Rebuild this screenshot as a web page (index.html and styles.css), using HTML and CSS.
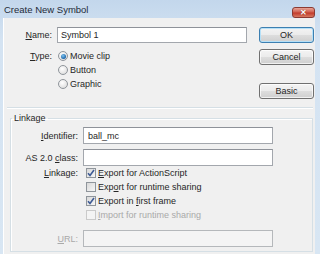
FILE: index.html
```html
<!DOCTYPE html>
<html lang="en">
<head>
  <meta charset="UTF-8" />
  <title>Create New Symbol</title>
  <link rel="stylesheet" href="styles.css">
</head>
<body>

  <div class="window">
    <div class="titlebar">
      <div class="title">Create New Symbol</div>
      <div class="close">&#x2715;</div>
    </div>

    <div class="client">
      <div class="top">
        <div class="fields">
          <div class="row name-row">
            <label class="label"><u>N</u>ame:</label>
            <input class="text name-input" type="text" value="Symbol 1">
          </div>
          <div class="row type-row">
            <label class="label type-label"><u>T</u>ype:</label>
            <div class="radios">
              <div class="radio checked"><span class="dot"></span><span>Movie clip</span></div>
              <div class="radio"><span class="dot"></span><span>Button</span></div>
              <div class="radio"><span class="dot"></span><span>Graphic</span></div>
            </div>
          </div>
        </div>

        <div class="buttons">
          <div class="btn default">OK</div>
          <div class="btn cancel">Cancel</div>
          <div class="btn basic">Basic</div>
        </div>
      </div>

      <div class="sep"></div>

      <fieldset class="group">
        <legend>Linkage</legend>

        <div class="row">
          <label class="label wide"><u>I</u>dentifier:</label>
          <input class="text link-input" type="text" value="ball_mc">
        </div>
        <div class="row as-row">
          <label class="label wide">AS 2.0 <u>c</u>lass:</label>
          <input class="text link-input" type="text" value="">
        </div>

        <div class="row checks-row">
          <label class="label wide check-label"><u>L</u>inkage:</label>
          <div class="checks">
            <div class="check on">
              <span class="box"><svg width="8" height="8" viewBox="0 0 8 8"><path d="M1 4.2 L3 6.5 L7 1" fill="none" stroke="#3d5a94" stroke-width="1.6"/></svg></span>
              <span><u>E</u>xport for ActionScript</span>
            </div>
            <div class="check">
              <span class="box"></span>
              <span>Exp<u>o</u>rt for runtime sharing</span>
            </div>
            <div class="check on">
              <span class="box"><svg width="8" height="8" viewBox="0 0 8 8"><path d="M1 4.2 L3 6.5 L7 1" fill="none" stroke="#3d5a94" stroke-width="1.6"/></svg></span>
              <span>Export in <u>f</u>irst frame</span>
            </div>
            <div class="check disabled">
              <span class="box"></span>
              <span><u>I</u>mport for runtime sharing</span>
            </div>
          </div>
        </div>

        <div class="row url-row">
          <label class="label wide disabled-text"><u>U</u>RL:</label>
          <input class="text link-input" type="text" value="" disabled>
        </div>
      </fieldset>
    </div>
  </div>

</body>
</html>
```

FILE: styles.css
```css
* {
  box-sizing: border-box;
}

body {
  margin: 0;
  font-family: 'Liberation Sans', Arial, sans-serif;
  font-size: 9px;
  color: #262626;
  background: #f0f0f0;
}

.window {
  width: 320px;
  height: 254px;
  display: flex;
  flex-direction: column;
  background: linear-gradient(to bottom, #c3d7ec, #d4e3f2 40px, #d8e6f3);
}

/* title bar */
.titlebar {
  height: 18px;
  display: flex;
  justify-content: space-between;
  align-items: flex-start;
}

.title {
  padding: 4px 0 0 4px;
  font-size: 9.5px;
  color: #1e2a38;
}

.close {
  width: 23px;
  height: 11px;
  margin: 7px 5px 0 0;
  border: 1px solid #8b3a32;
  border-radius: 3px;
  background: linear-gradient(to bottom, #e8a497, #d0604f 45%, #c23a2a 55%, #d77a62);
  color: #fff;
  font-size: 8px;
  line-height: 9px;
  text-align: center;
  font-weight: bold;
  text-shadow: 0 0 1px #6a1f18;
}

/* client area */
.client {
  flex: 1;
  margin: 0 5px 0 3px;
  background: #f0f0f0;
  box-shadow: inset 1px 0 #fff;
  display: flex;
  flex-direction: column;
}

.top {
  height: 89px;
  display: flex;
  justify-content: space-between;
  padding: 9px 0 0 0;
}

.row {
  display: flex;
  align-items: center;
}

.label {
  width: 49px;
  margin-right: 5px;
  text-align: right;
  white-space: nowrap;
}

.label.wide {
  width: 67px;
}

.text {
  height: 16px;
  width: 190px;
  border: 1px solid #a3a7ad;
  border-top-color: #8e9299;
  background: #fff;
  font-family: inherit;
  font-size: 9px;
  color: #262626;
  padding: 0 3px;
  margin: 0;
  outline: none;
}

.text:disabled {
  background: #f4f4f4;
  border-color: #b5b8bb;
}

.type-row {
  align-items: flex-start;
  margin-top: 6px;
}

.type-label {
  line-height: 14px;
}

.radio {
  height: 14px;
  display: flex;
  align-items: center;
  gap: 2px;
  padding-left: 1px;
}

.dot {
  width: 10px;
  height: 10px;
  border-radius: 50%;
  border: 1px solid #8f959b;
  background: radial-gradient(circle at 40% 35%, #fff, #e2e2e2 70%, #d0d0d0);
  display: flex;
  align-items: center;
  justify-content: center;
}

.radio.checked .dot::after {
  content: "";
  width: 5px;
  height: 5px;
  border-radius: 50%;
  background: radial-gradient(circle at 40% 35%, #7fc4f0, #1b64a8 70%);
}

/* buttons */
.buttons {
  width: 55px;
  margin-right: 1px;
  display: flex;
  flex-direction: column;
}

.btn {
  height: 16px;
  border: 1px solid #707070;
  border-radius: 3px;
  background: linear-gradient(to bottom, #f4f4f4, #ebebeb 48%, #dddddd 52%, #cfcfcf);
  text-align: center;
  line-height: 14px;
  box-shadow: inset 0 0 0 1px rgba(255,255,255,0.7);
}

.btn.default {
  border-color: #3c7fb1;
  box-shadow: inset 0 0 0 1px #b6e0f7;
}

.btn.cancel {
  margin-top: 6px;
}

.btn.basic {
  margin-top: 18px;
}

.sep {
  height: 2px;
  margin: 0 2px 0 4px;
  border-top: 1px solid #d5dfe5;
  border-bottom: 1px solid #fff;
}

/* linkage group */
.group {
  margin: 4px 2px 2px 7px;
  padding: 3px 0 3px 0;
  border: 1px solid #d5dfe5;
  box-shadow: inset 1px 1px #fff;
  flex: 1;
  min-width: 0;
}

.group legend {
  padding: 0 2px;
  margin-left: 1px;
  line-height: 11px;
}

.as-row {
  margin-top: 5px;
}

.group .text {
  height: 17px;
  padding: 0 4px;
}

.checks-row {
  align-items: flex-start;
}

.check-label {
  line-height: 14px;
}

.check {
  height: 14px;
  display: flex;
  align-items: center;
  gap: 2px;
  padding-left: 3px;
}

.box {
  width: 10px;
  height: 10px;
  border: 1px solid #8f959b;
  background: linear-gradient(135deg, #d8d8d8, #f6f6f6);
  display: flex;
  align-items: center;
  justify-content: center;
}

.check.disabled {
  color: #a9a9a9;
}

.check.disabled .box {
  border-color: #cacaca;
  background: #f4f4f4;
}

.disabled-text {
  color: #a9a9a9;
}

.url-row {
  margin-top: 8px;
}
```
